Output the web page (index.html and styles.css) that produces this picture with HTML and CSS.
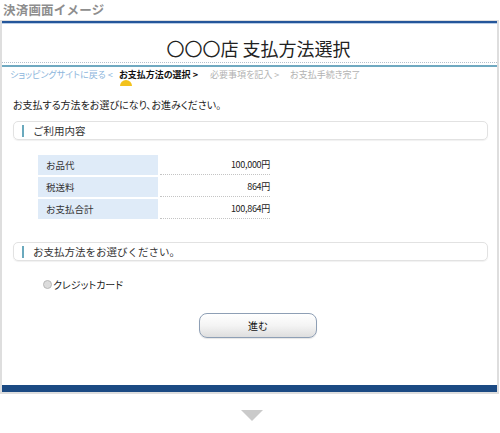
FILE: index.html
```html
<!DOCTYPE html>
<html lang="ja">
<head>
<meta charset="utf-8">
<title>決済画面イメージ</title>
<link rel="stylesheet" href="styles.css">
</head>
<body>
<div class="caption">決済画面イメージ</div>
<div class="frame">
  <div class="topbar"></div>
  <h1 class="shop-title">〇〇〇店 支払方法選択</h1>
  <div class="rule-dotted"></div>
  <div class="rule-solid"></div>
  <nav class="steps">
    <span class="step step-back">ショッピングサイトに戻る &lt;</span>
    <span class="step step-active">お支払方法の選択 &gt;<span class="marker"></span></span>
    <span class="step step-todo">必要事項を記入 &gt;</span>
    <span class="step step-todo">お支払手続き完了</span>
  </nav>
  <div class="content">
    <p class="intro">お支払する方法をお選びになり、お進みください。</p>
    <div class="section-head"><span class="bar"></span>ご利用内容</div>
    <div class="summary">
      <div class="label">お品代</div><div class="value">100,000円</div>
      <div class="label">税送料</div><div class="value">864円</div>
      <div class="label">お支払合計</div><div class="value">100,864円</div>
    </div>
    <div class="section-head section-head-2"><span class="bar"></span>お支払方法をお選びください。</div>
    <label class="radio-row"><span class="radio"></span>クレジットカード</label>
    <div class="actions"><span class="button">進む</span></div>
  </div>
  <div class="bottombar"></div>
</div>
<div class="arrow"></div>
</body>
</html>
```
FILE: styles.css
```css
body {
  margin: 0;
  width: 500px;
  background: #fff;
  font-family: "Noto Sans CJK JP", "Noto Sans", sans-serif;
  color: #333;
}
.caption {
  height: 20px;
  line-height: 19px;
  padding-left: 3px;
  font-size: 12.5px;
  font-weight: bold;
  color: #8e8e8e;
  letter-spacing: 0.2px;
}
.frame {
  margin-right: 1px;
  border: 2px solid #dedede;
  border-top: 1px solid #dedede;
}
.topbar {
  height: 2px;
  background: #24569a;
  border-bottom: 1px solid #b9cde6;
}
.shop-title {
  margin: 0;
  height: 38px;
  padding-top: 9px;
  box-sizing: border-box;
  line-height: 30px;
  font-size: 18px;
  font-weight: normal;
  text-align: center;
  padding-left: 18px;
  color: #222;
}
.rule-dotted {
  border-top: 1px dotted #b3bfcc;
  margin-bottom: 2px;
}
.rule-solid {
  height: 2px;
  background: #6fa9c1;
}
.steps {
  position: relative;
  display: flex;
  height: 20px;
  padding-top: 1px;
  box-sizing: border-box;
  line-height: 14px;
  padding-left: 8px;
  font-size: 9px;
  font-feature-settings: "palt";
}
.step { white-space: nowrap; position: relative; }
.step-back { color: #8db6dc; width: 109px; }
.step-active { color: #111; font-weight: bold; width: 91px; }
.step-todo { color: #b2b2b2; width: 80px; }
.marker {
  position: absolute;
  left: 1px;
  top: 12px;
  width: 12px;
  height: 6px;
  background: #f3c21c;
  border-radius: 6px 6px 0 0;
}
.content {
  padding: 0 9px 0 11px;
}
.intro {
  margin: 11px 0 0 0;
  line-height: 14px;
  font-size: 10px;
  font-feature-settings: "palt";
  color: #222;
}
.section-head {
  margin-top: 9px;
  height: 19px;
  box-sizing: border-box;
  border: 1px solid #e2e2e2;
  border-radius: 5px;
  box-shadow: 0 1px 1px rgba(0,0,0,0.06);
  display: flex;
  align-items: center;
  padding-left: 8px;
  font-size: 10.5px;
  color: #333;
}
.bar {
  width: 2px;
  height: 12px;
  background: #6aa9bd;
  margin-right: 9px;
}
.summary {
  margin: 15px 0 0 25px;
  display: grid;
  grid-template-columns: 120px 112px;
  grid-auto-rows: 20px;
  row-gap: 2px;
  font-size: 9.5px;
}
.label {
  background: #dfebf8;
  line-height: 20px;
  padding-left: 8px;
  color: #333;
}
.value {
  text-align: right;
  line-height: 19px;
  border-bottom: 1px dotted #c4c4c4;
  margin-left: 2px;
  font-size: 9px;
  letter-spacing: -0.3px;
  color: #222;
}
.section-head-2 { margin-top: 23px; }
.radio-row {
  display: flex;
  align-items: center;
  margin: 16px 0 0 30px;
  height: 14px;
  font-size: 10px;
  font-feature-settings: "palt";
  color: #222;
}
.radio {
  width: 7px;
  height: 7px;
  border-radius: 50%;
  border: 1px solid #b8b8b8;
  background: #dcdcdc;
  margin-right: 1px;
}
.actions {
  margin: 22px 0 0 186px;
  height: 25px;
}
.button {
  display: flex;
  align-items: center;
  justify-content: center;
  width: 118px;
  height: 25px;
  box-sizing: border-box;
  border: 1px solid #8e9fb5;
  border-radius: 8px;
  background: linear-gradient(#ffffff, #f4f4f4 50%, #dedede);
  box-shadow: 0 1px 1px rgba(0,0,0,0.1);
  font-size: 10px;
  color: #111;
}
.bottombar {
  margin-top: 47px;
  height: 7px;
  background: #1b4a83;
}
.arrow {
  margin: 16px 0 0 241px;
  width: 0;
  height: 0;
  border-left: 11px solid transparent;
  border-right: 11px solid transparent;
  border-top: 11px solid #cacaca;
}
```
